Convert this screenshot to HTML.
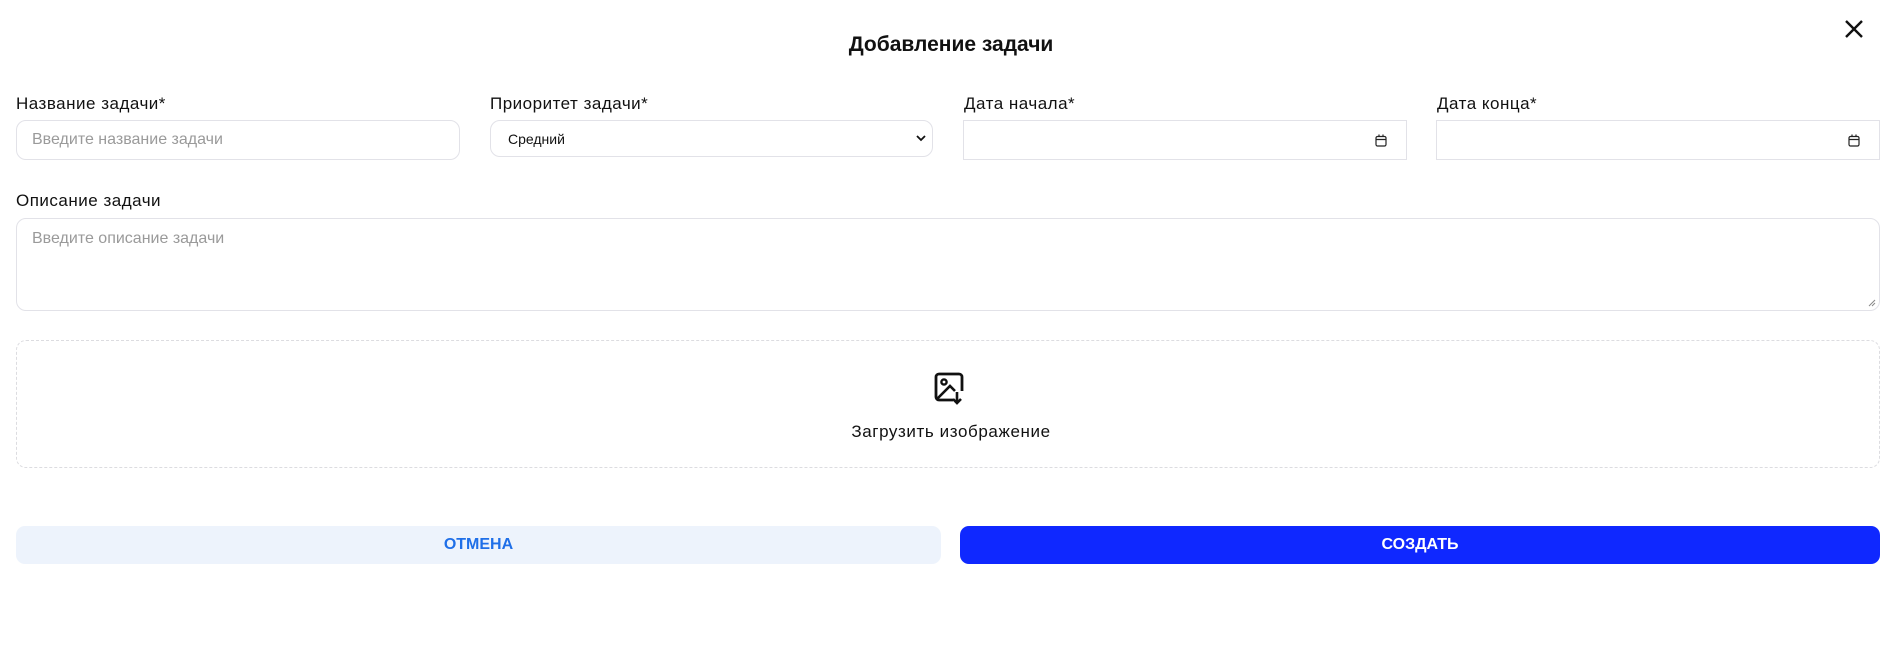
<!DOCTYPE html>
<html><head><meta charset="utf-8"><style>
*{box-sizing:border-box;margin:0;padding:0}
body{width:1902px;height:654px;background:#fff;font-family:"Liberation Sans",sans-serif;color:#111;position:relative;overflow:hidden}
.a{position:absolute}
.title{left:0;width:1902px;top:33px;text-align:center;font-weight:bold;font-size:21px}
.lbl{font-size:17px;letter-spacing:0.5px;top:94px}
.in{top:120px;height:40px;border:1px solid #e2e2e8;background:#fff}
.ph{color:#9a9a9a;font-size:16px}
</style></head><body>
<div class="a title">Добавление задачи</div>
<svg class="a" style="left:1844px;top:19px" width="20" height="20" viewBox="0 0 20 20"><path d="M2 2L18 18M18 2L2 18" stroke="#111" stroke-width="2.4"/></svg>

<div class="a lbl" style="left:16px">Название задачи*</div>
<div class="a lbl" style="left:490px">Приоритет задачи*</div>
<div class="a lbl" style="left:964px">Дата начала*</div>
<div class="a lbl" style="left:1437px">Дата конца*</div>

<div class="a in" style="left:16px;width:444px;border-radius:10px"><span class="a ph" style="left:15px;top:10px">Введите название задачи</span></div>
<div class="a in" style="left:490px;width:443px;height:37px;border-radius:10px"><span class="a" style="left:17px;top:10px;font-size:14px">Средний</span>
<svg class="a" style="right:6px;top:13px" width="10" height="8" viewBox="0 0 10 8"><path d="M1 2L5 6L9 2" stroke="#111" stroke-width="1.8" fill="none"/></svg></div>
<div class="a in" style="left:963px;width:444px"><svg class="a" style="right:19px;top:13px" width="12" height="13" viewBox="0 0 12 13"><rect x="1" y="2.5" width="10" height="9.5" rx="1.5" fill="none" stroke="#222" stroke-width="1.2"/><path d="M1 5.5H11M4 0.5V3M8 0.5V3" stroke="#222" stroke-width="1.2"/></svg></div>
<div class="a in" style="left:1436px;width:444px"><svg class="a" style="right:19px;top:13px" width="12" height="13" viewBox="0 0 12 13"><rect x="1" y="2.5" width="10" height="9.5" rx="1.5" fill="none" stroke="#222" stroke-width="1.2"/><path d="M1 5.5H11M4 0.5V3M8 0.5V3" stroke="#222" stroke-width="1.2"/></svg></div>

<div class="a" style="left:16px;top:191px;font-size:17px;letter-spacing:0.5px">Описание задачи</div>
<div class="a" style="left:16px;top:218px;width:1864px;height:93px;border:1px solid #e2e2e8;border-radius:10px"><span class="a ph" style="left:15px;top:11px">Введите описание задачи</span>
<svg class="a" style="right:3px;bottom:3px" width="8" height="8" viewBox="0 0 8 8"><path d="M7 1L1 7M7 4L4 7" stroke="#888"/></svg></div>

<div class="a" style="left:16px;top:340px;width:1864px;height:128px;border:1px dashed #dcdce0;border-radius:10px"></div>
<svg class="a" style="left:933px;top:372px" width="32" height="33" viewBox="0 0 32 33"><path d="M20 28H6a3 3 0 0 1-3-3V5a3 3 0 0 1 3-3h20a3 3 0 0 1 3 3v14" fill="none" stroke="#111" stroke-width="2.8"/><circle cx="11" cy="10" r="2.6" fill="none" stroke="#111" stroke-width="2.4"/><path d="M4 27L17 14L22 19" fill="none" stroke="#111" stroke-width="2.6"/><path d="M24 20V31M20 27L24 31L28 27" fill="none" stroke="#111" stroke-width="2.6"/></svg>
<div class="a" style="left:0;width:1902px;top:422px;text-align:center;font-size:17px;letter-spacing:0.6px">Загрузить изображение</div>

<div class="a" style="left:16px;top:526px;width:925px;height:38px;border-radius:9px;background:#edf3fc;color:#1f6fe8;font-weight:bold;font-size:16px;text-align:center;line-height:38px">ОТМЕНА</div>
<div class="a" style="left:960px;top:526px;width:920px;height:38px;border-radius:9px;background:#0f28ff;color:#fff;font-weight:bold;font-size:16px;text-align:center;line-height:38px">СОЗДАТЬ</div>
</body></html>
